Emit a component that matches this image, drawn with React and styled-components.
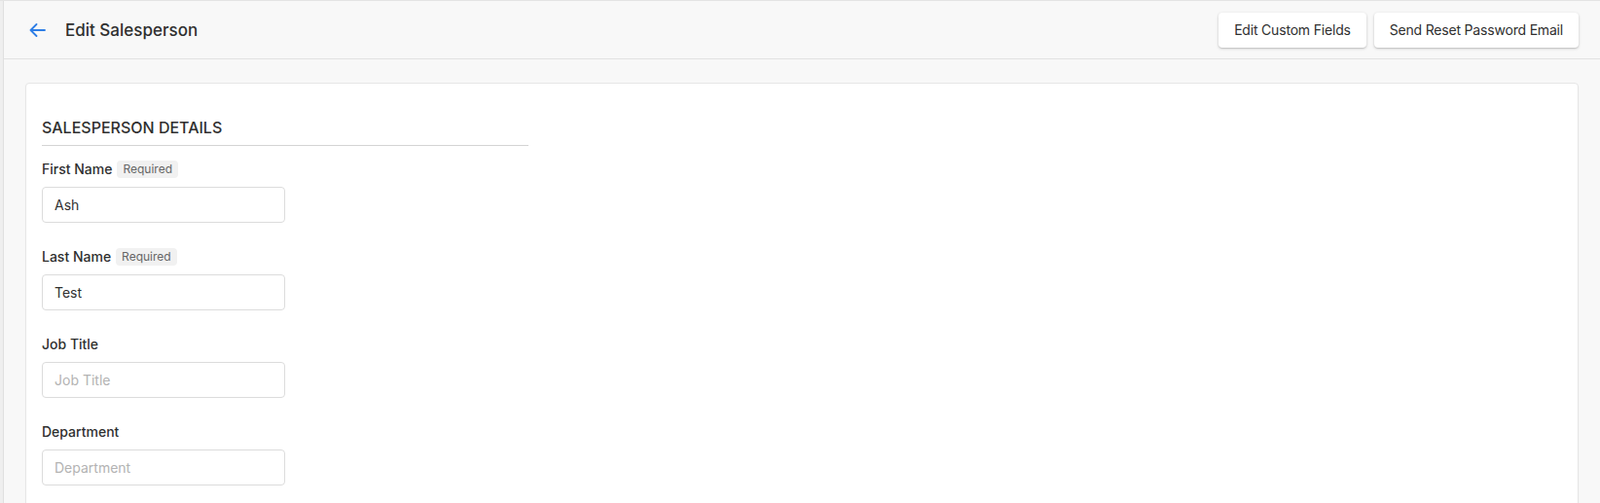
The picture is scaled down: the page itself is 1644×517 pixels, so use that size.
import React from "react";
import styled, { createGlobalStyle } from "styled-components";

const GlobalStyle = createGlobalStyle`
  * { box-sizing: border-box; }
  html, body { margin: 0; padding: 0; }
  body {
    font-family: Inter, "Noto Sans", "Liberation Sans", sans-serif;
    background: #f8f8f8;
    color: #333;
  }
`;

const Shell = styled.div`
  display: flex;
  height: 100vh;
  overflow: hidden;
  border-top: 1px solid #e4e4e4;
  background: #f8f8f8;
`;

const SideEdge = styled.div`
  width: 4px;
  flex: none;
  background: #efefef;
  border-right: 1px solid #e0e0e0;
`;

const Main = styled.div`
  flex: 1;
  display: flex;
  flex-direction: column;
  min-width: 0;
`;

const Header = styled.header`
  height: 60px;
  flex: none;
  display: flex;
  align-items: center;
  padding: 0 22px 0 22px;
  border-bottom: 1px solid #e2e2e2;
  background: #f8f8f8;
`;

const BackButton = styled.button`
  width: 24px;
  height: 24px;
  padding: 0;
  border: none;
  background: transparent;
  display: flex;
  align-items: center;
  justify-content: center;
  cursor: pointer;
  color: #2e7ee6;
`;

const Title = styled.h1`
  margin: 0 0 0 17px;
  font-size: 17px;
  font-weight: 500;
  color: #2f2f2f;
  line-height: 24px;
`;

const Actions = styled.div`
  margin-left: auto;
  display: flex;
  gap: 8px;
`;

const ActionButton = styled.button`
  height: 36px;
  padding: 0 16px;
  border: none;
  border-radius: 4px;
  background: #fff;
  font-family: inherit;
  font-size: 14px;
  letter-spacing: -0.19px;
  font-weight: 400;
  color: #2f2f2f;
  box-shadow: 0 1px 3px rgba(0, 0, 0, 0.22), 0 1px 1px rgba(0, 0, 0, 0.06);
  cursor: pointer;
`;

const Content = styled.main`
  flex: 1;
  padding: 24px 22px 0 22px;
  min-height: 0;
`;

const Card = styled.section`
  background: #fff;
  border: 1px solid #e6e6e6;
  border-radius: 4px;
  box-shadow: 0 1px 2px rgba(0, 0, 0, 0.04);
  padding: 33px 16px 32px;
  min-height: 600px;
`;

const SectionTitle = styled.h2`
  width: 500px;
  margin: 0 0 13px;
  padding-bottom: 6px;
  border-bottom: 1px solid #d4d4d4;
  font-size: 16px;
  line-height: 24px;
  font-weight: 500;
  color: #2f2f2f;
`;

const Field = styled.div`
  margin-bottom: 24px;
`;

const LabelRow = styled.div`
  display: flex;
  align-items: center;
  gap: 5px;
  height: 21px;
  margin-bottom: 8px;
  padding-top: 1px;
`;

const Label = styled.label`
  font-size: 14px;
  line-height: 20px;
  font-weight: 500;
  color: #2f2f2f;
`;

const Badge = styled.span`
  height: 18px;
  line-height: 18px;
  padding: 0 6px;
  border-radius: 4px;
  background: #f1f1f1;
  font-size: 12px;
  color: #666;
`;

const Input = styled.input`
  display: block;
  width: 250px;
  height: 37px;
  padding: 0 12px;
  border: 1px solid #dcdcdc;
  border-radius: 4px;
  background: #fff;
  font-family: inherit;
  font-size: 14px;
  color: #2f2f2f;
  outline: none;
  &::placeholder {
    color: #b3b3b3;
  }
`;

const fields = [
  { label: "First Name", required: true, value: "Ash" },
  { label: "Last Name", required: true, value: "Test" },
  { label: "Job Title", required: false, value: "" },
  { label: "Department", required: false, value: "" },
];

export default function App() {
  return (
    <>
      <GlobalStyle />
      <Shell>
        <SideEdge />
        <Main>
          <Header>
            <BackButton aria-label="Back">
              <svg width="17" height="14" viewBox="0 0 17 14" fill="none">
                <path
                  d="M16 7H1.5M7.5 1L1.5 7l6 6"
                  stroke="currentColor"
                  strokeWidth="1.8"
                  strokeLinecap="round"
                  strokeLinejoin="round"
                />
              </svg>
            </BackButton>
            <Title>Edit Salesperson</Title>
            <Actions>
              <ActionButton>Edit Custom Fields</ActionButton>
              <ActionButton>Send Reset Password Email</ActionButton>
            </Actions>
          </Header>
          <Content>
            <Card>
              <SectionTitle>SALESPERSON DETAILS</SectionTitle>
              {fields.map((f) => (
                <Field key={f.label}>
                  <LabelRow>
                    <Label>{f.label}</Label>
                    {f.required && <Badge>Required</Badge>}
                  </LabelRow>
                  <Input defaultValue={f.value} placeholder={f.label} />
                </Field>
              ))}
            </Card>
          </Content>
        </Main>
      </Shell>
    </>
  );
}
